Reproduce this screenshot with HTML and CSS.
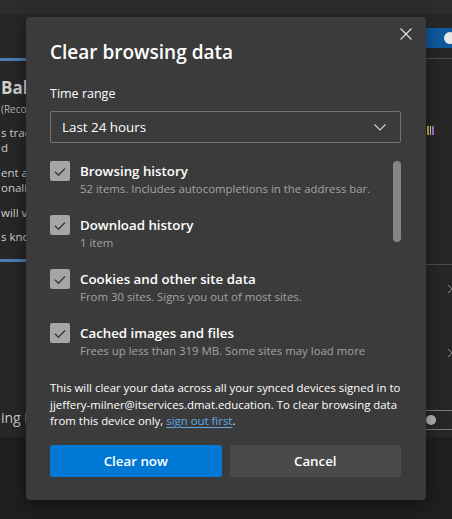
FILE: index.html
```html
<!DOCTYPE html>
<html lang="en">
<head>
<meta charset="utf-8">
<title>Clear browsing data</title>
<link rel="stylesheet" href="styles.css">
</head>
<body>
<div class="page">
  <div class="topbar"></div>
  <div class="panel">
    <div class="left-col">
      <div class="card">
        <div class="card-title">Bal</div>
        <div class="card-sub">(Recor</div>
        <div class="card-item">s trac<br>d</div>
        <div class="card-item">ent ar<br>onaliz</div>
        <div class="card-item item-tight">will v</div>
        <div class="card-item item-tight">s kno</div>
      </div>
      <div class="left-row">ing I</div>
    </div>
    <div class="right-col">
      <div class="toggle-on"><span class="knob"></span></div>
      <div class="divider d1"></div>
      <div class="bars"><span class="bar b1"></span><span class="bar b2"></span><span class="bar b3"></span></div>
      <div class="divider d2"></div>
      <svg class="chev c1" width="8" height="10" viewBox="0 0 8 10"><path d="M1 1 L5 5 L1 9" fill="none" stroke="#8a8a8a" stroke-width="1"/></svg>
      <svg class="chev c2" width="8" height="10" viewBox="0 0 8 10"><path d="M1 1 L5 5 L1 9" fill="none" stroke="#8a8a8a" stroke-width="1"/></svg>
      <div class="toggle-off"><span class="knob-off"></span></div>
    </div>
  </div>
  <div class="below"></div>
</div>

<div class="dialog" role="dialog" aria-label="Clear browsing data">
  <button class="close" aria-label="Close">
    <svg width="12" height="12" viewBox="0 0 12 12"><path d="M0.5 0.5 L11.5 11.5 M11.5 0.5 L0.5 11.5" stroke="#e6e6e6" stroke-width="1.1" fill="none"/></svg>
  </button>
  <h1 class="title">Clear browsing data</h1>
  <div class="field-label">Time range</div>
  <div class="select">
    <span>Last 24 hours</span>
    <svg width="12" height="7" viewBox="0 0 12 7"><path d="M0.5 0.5 L6 6 L11.5 0.5" stroke="#d6d6d6" stroke-width="1.1" fill="none"/></svg>
  </div>
  <div class="list-wrap">
    <div class="list">
      <div class="item">
        <span class="checkbox"><svg width="20" height="20" viewBox="0 0 20 20"><path d="M5 10.8 L8.4 14.2 L15 7.4" stroke="#3a3a3a" stroke-width="1.4" fill="none"/></svg></span>
        <div class="item-text">
          <div class="item-label">Browsing history</div>
          <div class="item-sub">52 items. Includes autocompletions in the address bar.</div>
        </div>
      </div>
      <div class="item">
        <span class="checkbox"><svg width="20" height="20" viewBox="0 0 20 20"><path d="M5 10.8 L8.4 14.2 L15 7.4" stroke="#3a3a3a" stroke-width="1.4" fill="none"/></svg></span>
        <div class="item-text">
          <div class="item-label">Download history</div>
          <div class="item-sub">1 item</div>
        </div>
      </div>
      <div class="item">
        <span class="checkbox"><svg width="20" height="20" viewBox="0 0 20 20"><path d="M5 10.8 L8.4 14.2 L15 7.4" stroke="#3a3a3a" stroke-width="1.4" fill="none"/></svg></span>
        <div class="item-text">
          <div class="item-label">Cookies and other site data</div>
          <div class="item-sub">From 30 sites. Signs you out of most sites.</div>
        </div>
      </div>
      <div class="item">
        <span class="checkbox"><svg width="20" height="20" viewBox="0 0 20 20"><path d="M5 10.8 L8.4 14.2 L15 7.4" stroke="#3a3a3a" stroke-width="1.4" fill="none"/></svg></span>
        <div class="item-text">
          <div class="item-label">Cached images and files</div>
          <div class="item-sub">Frees up less than 319 MB. Some sites may load more</div>
        </div>
      </div>
    </div>
    <div class="scroll-track"><div class="scroll-thumb"></div></div>
  </div>
  <p class="note">This will clear your data across all your synced devices signed in to<br>jjeffery-milner@itservices.dmat.education. To clear browsing data<br>from this device only, <a href="#" class="link">sign out first</a>.</p>
  <div class="buttons">
    <button class="btn primary">Clear now</button>
    <button class="btn secondary">Cancel</button>
  </div>
</div>
</body>
</html>
```

FILE: styles.css
```css
html, body {
  margin: 0;
  padding: 0;
}
body {
  width: 452px;
  height: 519px;
  overflow: hidden;
  position: relative;
  background: #1f1f1f;
  font-family: "Open Sans", "Noto Sans", sans-serif;
  color: #ffffff;
}

/* Background settings page */
.page {
  display: flex;
  flex-direction: column;
  height: 519px;
}
.topbar {
  height: 14px;
  background: #2c2c2c;
  flex: none;
}
.panel {
  height: 423px;
  flex: none;
  background: #272727;
  display: flex;
  justify-content: space-between;
}
.below {
  flex: 1;
  background: #1f1f1f;
}
.left-col {
  width: 26px;
  overflow: hidden;
  white-space: nowrap;
  color: #cfcfcf;
}
.card {
  margin-top: 44px;
  height: 198px;
  border-top: 3px solid #4a7db0;
  border-bottom: 3px solid #4a7db0;
  padding-left: 1px;
}
.card-title {
  margin-top: 14px;
  font-size: 17px;
  font-weight: 700;
  line-height: 26px;
  color: #d0d0d0;
}
.card-sub {
  margin-top: 1px;
  font-size: 10px;
  line-height: 14px;
  color: #b4b4b4;
}
.card-item {
  margin-top: 9px;
  font-size: 11.5px;
  line-height: 15px;
  color: #cfcfcf;
}
.card-item + .card-item {
  margin-top: 10px;
}
.card-item.item-tight + .card-item.item-tight {
  margin-top: 9px;
}
.left-row {
  margin-top: 146px;
  padding-left: 1px;
  font-size: 14px;
  line-height: 20px;
  color: #c8c8c8;
}

.right-col {
  width: 26px;
  overflow: hidden;
  display: flex;
  flex-direction: column;
}
.toggle-on {
  margin-top: 14px;
  margin-left: -16px;
  width: 50px;
  height: 20px;
  border-radius: 10px;
  background: #0f5a9e;
  display: flex;
  align-items: center;
  justify-content: flex-end;
  padding-right: 4px;
  box-sizing: border-box;
  flex: none;
}
.knob {
  width: 12px;
  height: 12px;
  border-radius: 50%;
  background: #e8e8e8;
}
.divider {
  height: 1px;
  background: #4c4c4c;
  flex: none;
}
.d1 { margin-top: 10px; }
.bars {
  margin-top: 67px;
  height: 9px;
  display: flex;
  gap: 1px;
  padding-left: 1px;
  flex: none;
}
.bar { display: block; height: 9px; }
.b1 { width: 2px; background: #d8a23a; }
.b2 { width: 1px; background: #dcdcdc; }
.b3 { width: 2px; background: #9c74c4; }
.d2 { margin-top: 129px; }
.chev {
  display: block;
  margin-left: 21px;
  flex: none;
}
.c1 { margin-top: 19px; }
.c2 { margin-top: 54px; }
.toggle-off {
  margin-top: 52px;
  margin-left: -10px;
  width: 50px;
  height: 20px;
  box-sizing: border-box;
  border: 1px solid #7a7a7a;
  border-radius: 10px;
  display: flex;
  align-items: center;
  padding-left: 9px;
  flex: none;
}
.knob-off {
  width: 10px;
  height: 10px;
  border-radius: 50%;
  background: #b4b4b4;
}

/* Dialog overlay */
.dialog {
  position: absolute;
  left: 26px;
  top: 17px;
  width: 400px;
  box-sizing: border-box;
  padding: 21px 25px 23px 24px;
  background: #3b3b3b;
  border-radius: 4px;
  box-shadow: 0 4px 18px rgba(0, 0, 0, 0.45);
  display: flex;
  flex-direction: column;
}
.close {
  position: absolute;
  right: 14px;
  top: 11px;
  width: 12px;
  height: 12px;
  padding: 0;
  border: 0;
  background: transparent;
  display: flex;
}
.title {
  margin: 0;
  font-size: 19px;
  font-weight: 600;
  line-height: 28px;
  color: #ffffff;
}
.field-label {
  margin-top: 19px;
  font-size: 12.5px;
  line-height: 18px;
  color: #ffffff;
}
.select {
  margin-top: 8px;
  height: 32px;
  box-sizing: border-box;
  border: 1px solid #737373;
  border-radius: 2px;
  display: flex;
  align-items: center;
  justify-content: space-between;
  padding: 0 14px 0 11px;
  font-size: 13.4px;
  color: #ffffff;
}
.select svg { display: block; }
.list-wrap {
  margin-top: 18px;
  height: 200px;
  display: flex;
  overflow: hidden;
}
.list {
  flex: 1;
  display: flex;
  flex-direction: column;
  gap: 18px;
}
.item {
  display: flex;
  gap: 10px;
}
.checkbox {
  width: 20px;
  height: 20px;
  border-radius: 2px;
  background: #a6a6a6;
  flex: none;
}
.checkbox svg { display: block; }
.item-label {
  font-size: 13.3px;
  font-weight: 600;
  line-height: 20px;
  color: #ffffff;
}
.item-sub {
  font-size: 11.4px;
  line-height: 16px;
  color: #a3a3a3;
  white-space: nowrap;
}
.scroll-track {
  width: 8px;
  flex: none;
}
.scroll-thumb {
  height: 81px;
  border-radius: 4px;
  background: #858585;
}
.note {
  margin: 19px 0 0;
  font-size: 11.4px;
  line-height: 16.5px;
  color: #ffffff;
  white-space: nowrap;
}
.link {
  color: #5fa9e6;
  text-decoration: underline;
  text-underline-offset: 2px;
}
.buttons {
  margin-top: 15px;
  display: flex;
  gap: 8px;
}
.btn {
  flex: 1;
  height: 32px;
  border: 0;
  border-radius: 2px;
  font-family: inherit;
  font-size: 13.3px;
  font-weight: 600;
  color: #ffffff;
  padding: 0;
}
.primary { background: #0078d4; }
.secondary { background: #4a4a4a; }
```
